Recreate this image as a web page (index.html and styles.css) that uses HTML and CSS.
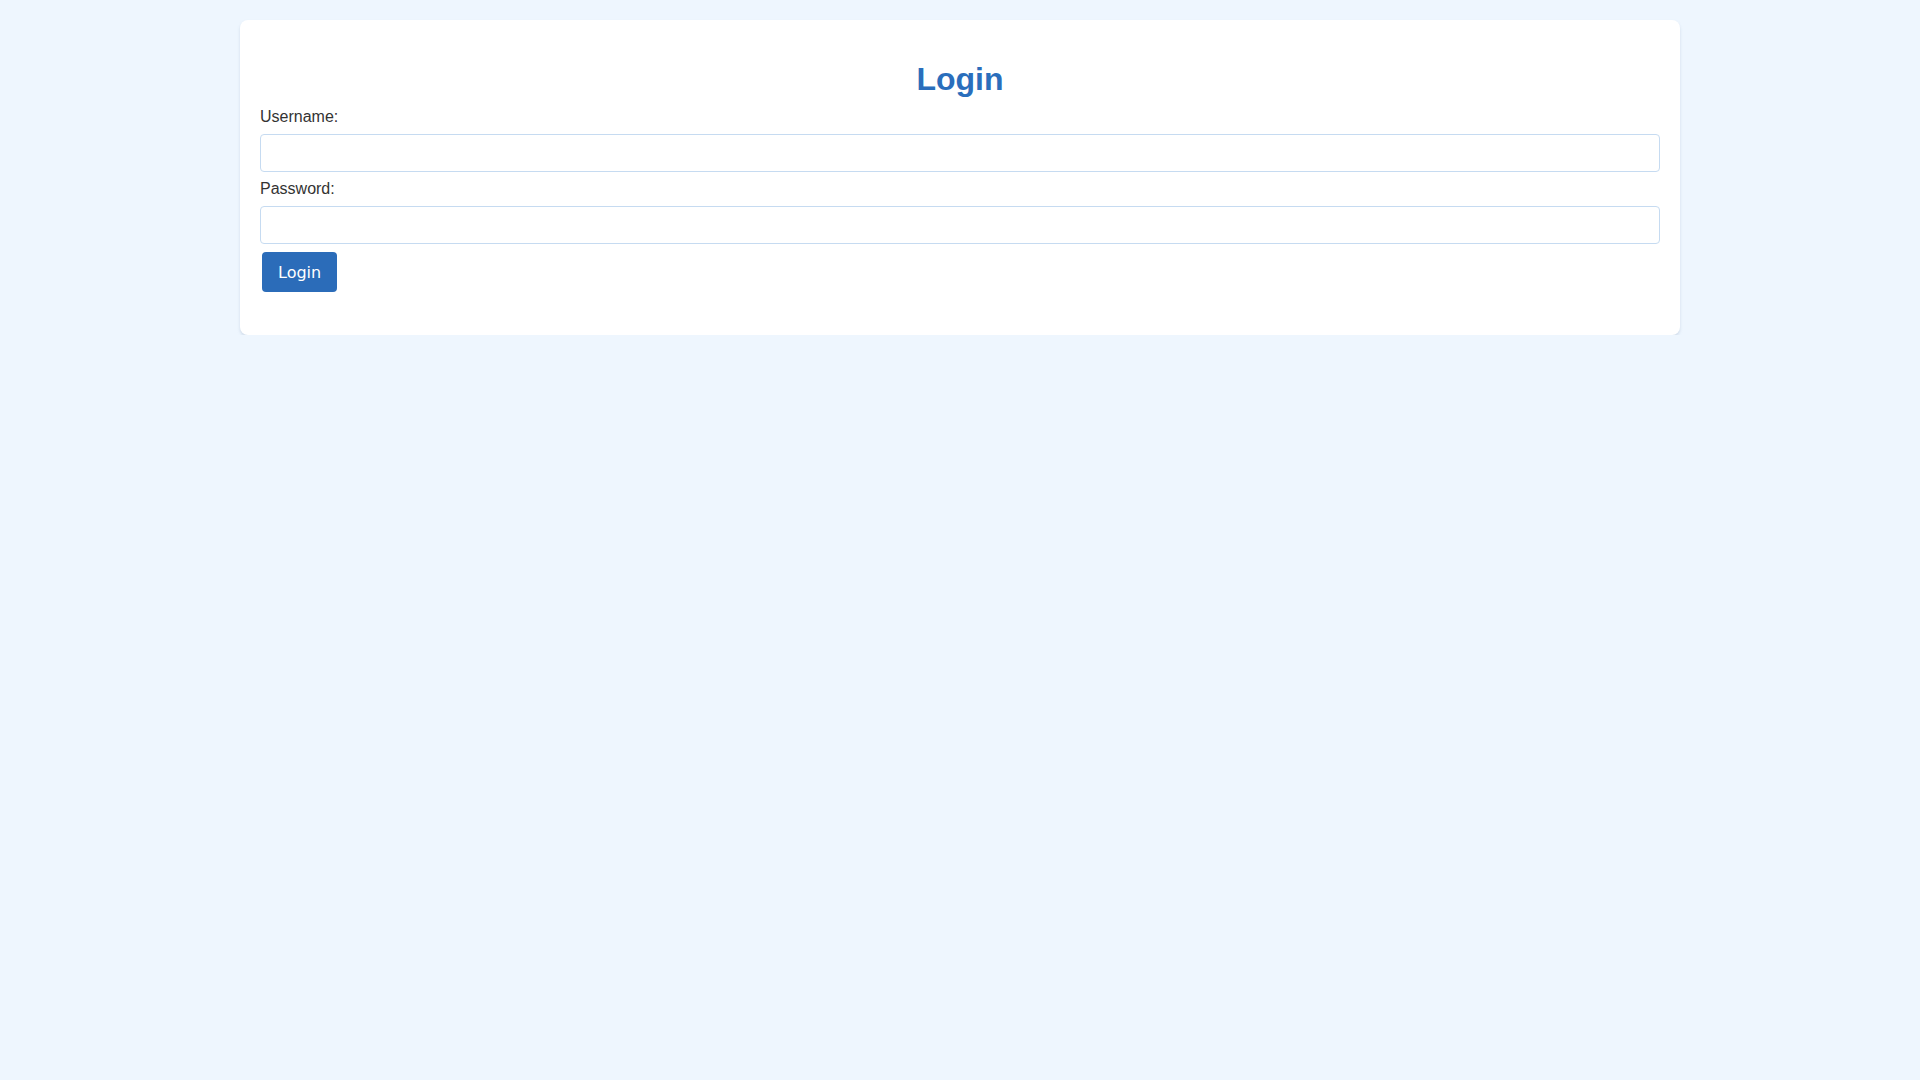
FILE: index.html
```html
<!DOCTYPE html>
<html lang="en">
<head>
<meta charset="utf-8">
<title>Login</title>
<link rel="stylesheet" href="styles.css">
</head>
<body>
<div class="card">
  <h1 class="title">Login</h1>
  <form class="form">
    <label class="label" for="username">Username:</label>
    <input class="field" type="text" id="username" name="username">
    <label class="label" for="password">Password:</label>
    <input class="field" type="password" id="password" name="password">
    <button class="btn" type="button">Login</button>
  </form>
</div>
</body>
</html>
```

FILE: styles.css
```css
html, body {
  margin: 0;
  padding: 0;
}
body {
  background: #eef6fe;
  font-family: "Liberation Sans", Arial, sans-serif;
  font-size: 16px;
  color: #333333;
  padding-top: 20px;
}
.card {
  width: 1440px;
  margin: 0 auto;
  box-sizing: border-box;
  padding: 20px 20px 20px;
  background: #ffffff;
  border-radius: 8px;
  box-shadow: 0 2px 3px rgba(150, 170, 195, 0.35);
}
.title {
  margin: 21px 0 10px;
  text-align: center;
  font-size: 32px;
  font-weight: bold;
  color: #2a6ebc;
  line-height: 37px;
}
.form {
  margin: 0;
  padding-bottom: 21px;
}
.label {
  display: block;
  line-height: 18px;
  color: #333333;
}
.field {
  display: block;
  width: 100%;
  box-sizing: border-box;
  height: 38px;
  margin: 8px 0;
  padding: 8px;
  border: 1px solid #c6dbf1;
  border-radius: 4px;
  font-size: 16px;
  background: #ffffff;
  outline: none;
}
.btn {
  display: block;
  margin: 3px 2px 2px;
  height: 40px;
  padding: 0 16px;
  border: none;
  border-radius: 4px;
  background: #2b6cb9;
  color: #ffffff;
  font-family: "DejaVu Sans", sans-serif;
  font-size: 16px;
  cursor: pointer;
}
```
